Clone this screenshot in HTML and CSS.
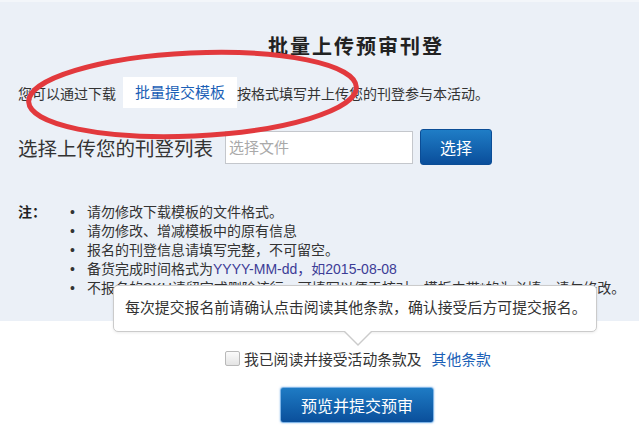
FILE: index.html
```html
<!DOCTYPE html>
<html lang="zh-CN">
<head>
<meta charset="utf-8">
<title>批量上传预审刊登</title>
<link rel="stylesheet" href="styles.css">
</head>
<body>
<div class="page">
  <section class="panel">
    <h1 class="title">批量上传预审刊登</h1>
    <div class="intro">
      <span>您可以通过下载</span>
      <a class="template-link">批量提交模板</a>
      <span>按格式填写并上传您的刊登参与本活动。</span>
    </div>
    <div class="upload">
      <span class="upload-label">选择上传您的刊登列表</span>
      <div class="file-input">选择文件</div>
      <button class="btn-select">选择</button>
    </div>
    <div class="notes">
      <div class="notes-head">注：</div>
      <ul class="notes-list">
        <li>请勿修改下载模板的文件格式。</li>
        <li>请勿修改、增减模板中的原有信息</li>
        <li>报名的刊登信息请填写完整，不可留空。</li>
        <li>备货完成时间格式为<span class="fmt">YYYY-MM-dd，如2015-08-08</span></li>
        <li>不报名的SKU请留空或删除该行，可填写以便于核对，模板中带*的为必填，请勿修改。</li>
      </ul>
    </div>
  </section>
  <section class="footer">
    <div class="agree">
      <span class="checkbox"></span>
      <span class="agree-text">我已阅读并接受活动条款及</span>
      <a class="terms-link">其他条款</a>
    </div>
    <button class="btn-submit">预览并提交预审</button>
  </section>
  <div class="tooltip">每次提交报名前请确认点击阅读其他条款，确认接受后方可提交报名。</div>
  <svg class="annotation" width="639" height="432" viewBox="0 0 639 432">
    <ellipse cx="192.5" cy="94.5" rx="164" ry="41.5" transform="rotate(-2.6 192.5 94.5)" fill="none" stroke="#e2393d" stroke-width="5"/>
  </svg>
</div>
</body>
</html>
```

FILE: styles.css
```css
html, body {
  margin: 0;
  padding: 0;
  background: #ffffff;
}
body {
  font-family: "Liberation Sans", "Noto Sans CJK SC", sans-serif;
  color: #333333;
  width: 639px;
  height: 432px;
  overflow: hidden;
}
.page {
  position: relative;
  width: 639px;
  height: 432px;
}
.panel {
  background: #ebf0f7;
  border-top: 2px solid #f3f6fa;
  height: 321px;
  box-sizing: border-box;
  padding-left: 18px;
}
.title {
  margin: 0 0 0 250px;
  padding-top: 32px;
  font-size: 20px;
  line-height: 26px;
  font-weight: bold;
  letter-spacing: 2px;
  color: #222222;
}
.intro {
  margin-top: 17px;
  height: 31px;
  display: flex;
  align-items: center;
  font-size: 14px;
  color: #333333;
}
.template-link {
  margin-left: 7px;
  height: 31px;
  padding: 0 12px;
  background: #ffffff;
  color: #1b5fb6;
  font-size: 15px;
  line-height: 31px;
}
.upload {
  margin-top: 21px;
  height: 36px;
  display: flex;
  align-items: center;
}
.upload-label {
  font-size: 19.5px;
  color: #333333;
}
.file-input {
  margin-left: 12px;
  width: 188px;
  height: 33px;
  box-sizing: border-box;
  border: 1px solid #c4c7cc;
  background: #ffffff;
  color: #a9a9a9;
  font-size: 15px;
  line-height: 31px;
  padding-left: 3px;
}
.btn-select {
  margin-left: 7px;
  width: 72px;
  height: 36px;
  border: 1px solid #0b4d96;
  border-radius: 3px;
  background: linear-gradient(#1f7dc6, #0a4e9b);
  color: #ffffff;
  font-family: inherit;
  font-size: 16px;
  padding: 0;
}
.notes {
  margin-top: 38px;
  display: flex;
  font-size: 14px;
  line-height: 19px;
}
.notes-head {
  width: 52px;
  font-weight: bold;
  color: #222222;
}
.notes-list {
  margin: 0;
  padding: 0;
  list-style: none;
  white-space: nowrap;
}
.notes-list li::before {
  content: "•";
  display: inline-block;
  width: 17px;
  color: #333333;
}
.fmt {
  color: #3c3c96;
}
.footer {
  padding-top: 27px;
}
.agree {
  margin-left: 225px;
  height: 20px;
  display: flex;
  align-items: center;
  font-size: 14.8px;
}
.checkbox {
  width: 15px;
  height: 15px;
  box-sizing: border-box;
  border: 1px solid #b9b9b9;
  border-radius: 2px;
  background: linear-gradient(#fbfbfb, #e4e4e4);
}
.agree-text {
  margin-left: 4px;
  color: #333333;
}
.terms-link {
  margin-left: 10px;
  color: #1b5fb6;
}
.btn-submit {
  display: block;
  margin: 19px 0 0 280px;
  width: 154px;
  height: 36px;
  border: 1px solid #7fb4e6;
  border-radius: 3px;
  background: linear-gradient(#1e7bc4, #0a4f9b);
  box-shadow: 0 0 2px rgba(90, 160, 230, 0.7);
  color: #ffffff;
  font-family: inherit;
  font-size: 16px;
  padding: 0;
}
.tooltip {
  position: absolute;
  left: 113px;
  top: 285px;
  width: 484px;
  height: 47px;
  box-sizing: border-box;
  border: 1px solid #cbcbcb;
  border-radius: 5px;
  background: #ffffff;
  box-shadow: 0 1px 3px rgba(0, 0, 0, 0.08);
  padding-left: 11px;
  font-size: 14.9px;
  line-height: 45px;
  color: #333333;
  white-space: nowrap;
}
.tooltip::before,
.tooltip::after {
  content: "";
  position: absolute;
  width: 0;
  height: 0;
  border-style: solid;
}
.tooltip::before {
  left: 229px;
  bottom: -15px;
  border-width: 15px 15px 0 15px;
  border-color: #cbcbcb transparent transparent transparent;
}
.tooltip::after {
  left: 230px;
  bottom: -13px;
  border-width: 14px 14px 0 14px;
  border-color: #ffffff transparent transparent transparent;
}
.annotation {
  position: absolute;
  left: 0;
  top: 0;
  pointer-events: none;
}
```
